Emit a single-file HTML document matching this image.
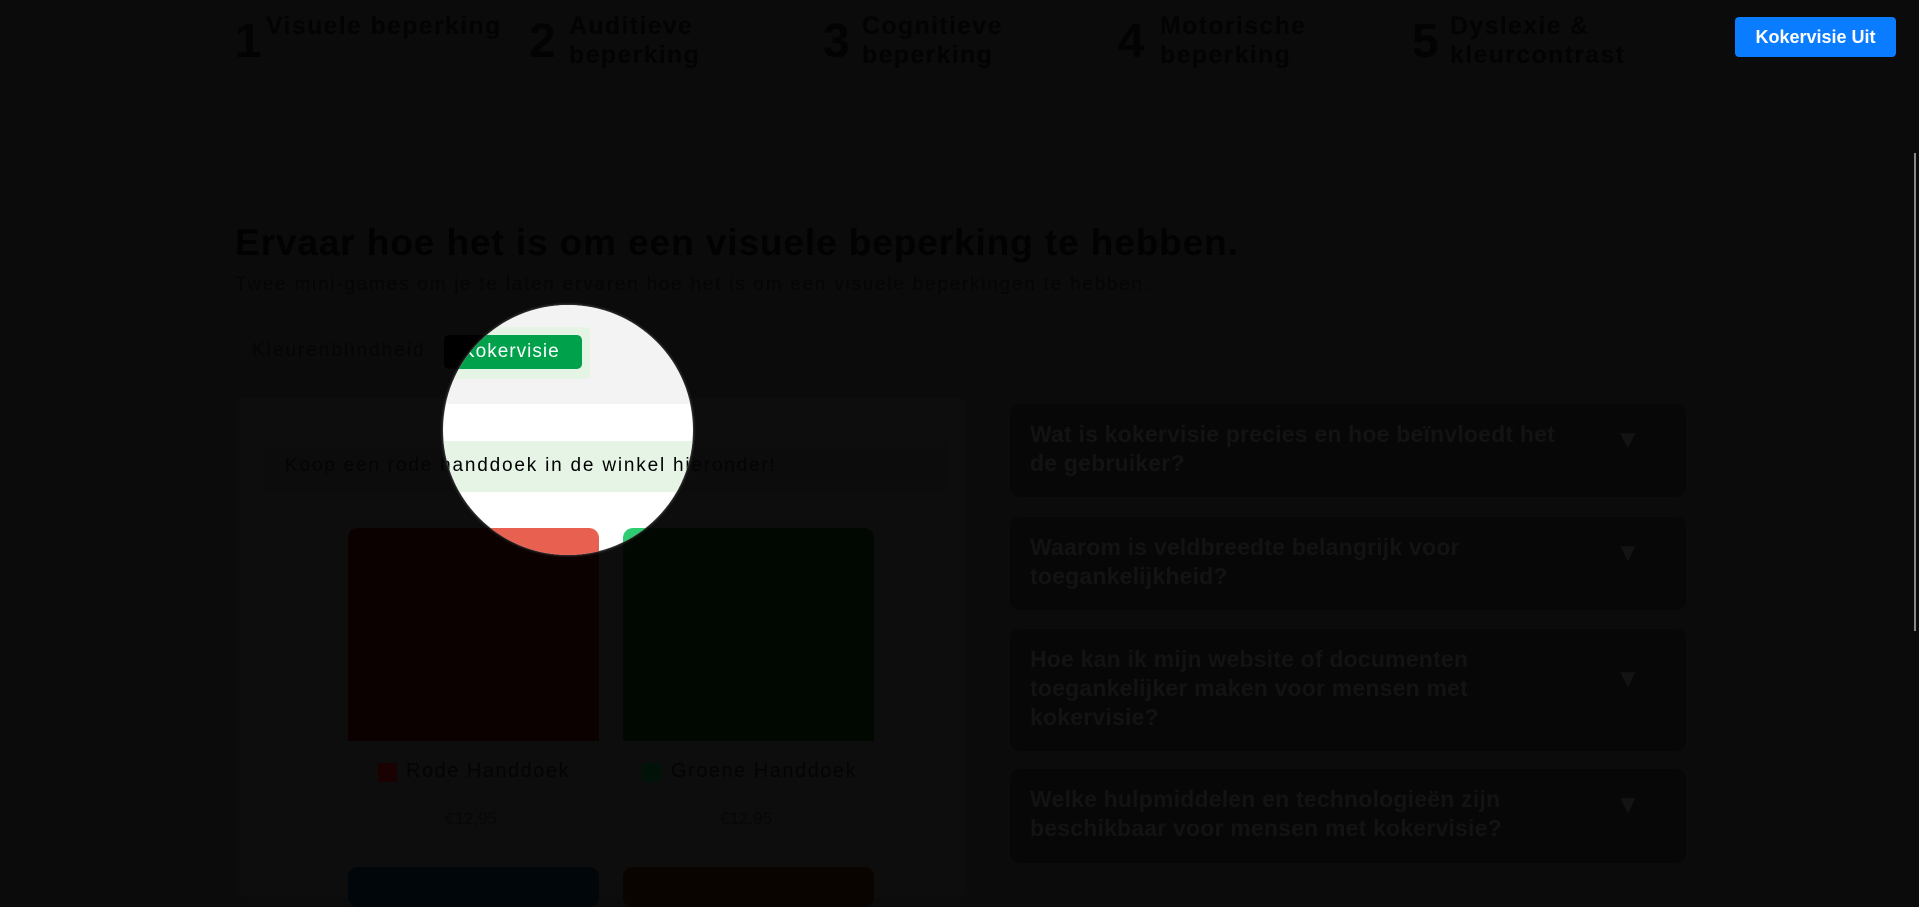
<!DOCTYPE html>
<html><head><meta charset="utf-8">
<style>
*{margin:0;padding:0;box-sizing:border-box}
body{width:1919px;height:897px;overflow:hidden;background:#0b0b0b;font-family:"Liberation Sans",sans-serif;position:relative;color:#020202}
.a{position:absolute}
.num{font-size:48px;font-weight:bold;color:#030303;line-height:1}
.lab{font-size:25px;font-weight:bold;color:#030303;line-height:29px;letter-spacing:1.3px}
.faq{position:absolute;left:1010px;width:676px;background:#070707;border-radius:10px}
.faq p{position:absolute;left:20px;top:16px;width:540px;font-size:23px;font-weight:bold;color:#131313;line-height:29px;letter-spacing:0.2px}
.faq span{position:absolute;left:605px;font-size:26px;color:#131313}
.card{position:absolute;width:251px;border-radius:10px;background:#0d0d0d}
</style></head><body>
<div class="a num" style="left:235px;top:18px">1</div><div class="a lab" style="left:266px;top:12px">Visuele beperking</div>
<div class="a num" style="left:529px;top:18px">2</div><div class="a lab" style="left:569px;top:12px">Auditieve<br>beperking</div>
<div class="a num" style="left:823px;top:18px">3</div><div class="a lab" style="left:862px;top:12px">Cognitieve<br>beperking</div>
<div class="a num" style="left:1118px;top:18px">4</div><div class="a lab" style="left:1160px;top:12px">Motorische<br>beperking</div>
<div class="a num" style="left:1412px;top:18px">5</div><div class="a lab" style="left:1450px;top:12px">Dyslexie &amp;<br>kleurcontrast</div>
<div class="a" style="left:1735px;top:17px;width:161px;height:40px;background:#0a7cff;border-radius:4px;color:#fff;font-weight:bold;font-size:18px;line-height:40px;text-align:center">Kokervisie Uit</div>
<div class="a" style="left:1914px;top:153px;width:2px;height:478px;background:#8a8a8a"></div>

<div class="a" style="left:235px;top:222px;font-size:37px;font-weight:bold;color:#020202;letter-spacing:0.9px">Ervaar hoe het is om een visuele beperking te hebben.</div>
<div class="a" style="left:235px;top:274px;font-size:19px;color:#050505;letter-spacing:1.75px">Twee mini-games om je te laten ervaren hoe het is om een visuele beperkingen te hebben.</div>
<div class="a" style="left:252px;top:340px;font-size:19px;color:#050505;letter-spacing:2px">Kleurenblindheid</div>
<div class="a" style="left:444px;top:335px;width:138px;height:34px;background:#000;border-radius:5px"></div>

<div class="a" style="left:236px;top:398px;width:731px;height:499px;background:#0d0d0d;border-radius:8px"></div>
<div class="a" style="left:263px;top:441px;width:686px;height:51px;background:#0c0c0c"></div>
<div class="a" style="left:285px;top:455px;font-size:19px;color:#040404;letter-spacing:1.8px">Koop een rode handdoek in de winkel hieronder!</div>

<div class="card" style="left:348px;top:528px;height:317px"><div style="height:213px;background:#0b0101;border-radius:10px 10px 0 0"></div></div>
<div class="card" style="left:623px;top:528px;height:317px"><div style="height:213px;background:#010802;border-radius:10px 10px 0 0"></div></div>
<div class="a" style="left:378px;top:763px;width:19px;height:19px;background:#1a0203;border-radius:2px"></div>
<div class="a" style="left:406px;top:760px;font-size:20px;color:#040404;letter-spacing:1.5px">Rode Handdoek</div>
<div class="a" style="left:642px;top:763px;width:19px;height:19px;background:#011208;border-radius:2px"></div>
<div class="a" style="left:671px;top:760px;font-size:20px;color:#040404;letter-spacing:1.5px">Groene Handdoek</div>
<div class="a" style="left:445px;top:809px;font-size:17px;color:#070707">€12,95</div>
<div class="a" style="left:720px;top:809px;font-size:17px;color:#070707">€12,95</div>
<div class="card" style="left:348px;top:867px;height:40px;background:#01060a"></div>
<div class="card" style="left:623px;top:867px;height:40px;background:#0a0401"></div>

<div class="faq" style="top:404px;height:93px"><p>Wat is kokervisie precies en hoe beïnvloedt het de gebruiker?</p><span style="top:20px">▼</span></div>
<div class="faq" style="top:517px;height:93px"><p>Waarom is veldbreedte belangrijk voor toegankelijkheid?</p><span style="top:20px">▼</span></div>
<div class="faq" style="top:629px;height:122px"><p>Hoe kan ik mijn website of documenten toegankelijker maken voor mensen met kokervisie?</p><span style="top:34px">▼</span></div>
<div class="faq" style="top:769px;height:94px"><p>Welke hulpmiddelen en technologieën zijn beschikbaar voor mensen met kokervisie?</p><span style="top:20px">▼</span></div>

<div class="a" style="left:443px;top:305px;width:250px;height:250px;border-radius:50%;overflow:hidden;box-shadow:0 0 3px rgba(200,200,200,.5)">
 <div class="a" style="left:-443px;top:-305px;width:1919px;height:897px;background:#fff">
  <div class="a" style="left:0;top:0;width:1919px;height:404px;background:#f3f3f3"></div>
  <div class="a" style="left:436px;top:327px;width:154px;height:52px;background:#e6f4e6;border-radius:5px"></div>
  <div class="a" style="left:444px;top:335px;width:138px;height:34px;background:#00a14b;border-radius:5px;color:#fff;font-size:19px;line-height:34px;padding-left:18px;letter-spacing:1px">Kokervisie</div>
  <div class="a" style="left:263px;top:441px;width:686px;height:51px;background:#e6f4e6"></div>
  <div class="a" style="left:285px;top:455px;font-size:19px;color:#000;letter-spacing:1.8px">Koop een rode handdoek in de winkel hieronder!</div>
  <div class="a" style="left:348px;top:528px;width:251px;height:213px;background:#e8604f;border-radius:10px 10px 0 0"></div>
  <div class="a" style="left:623px;top:528px;width:251px;height:213px;background:#2ecc71;border-radius:10px 10px 0 0"></div>
 </div>
</div>
</body></html>
